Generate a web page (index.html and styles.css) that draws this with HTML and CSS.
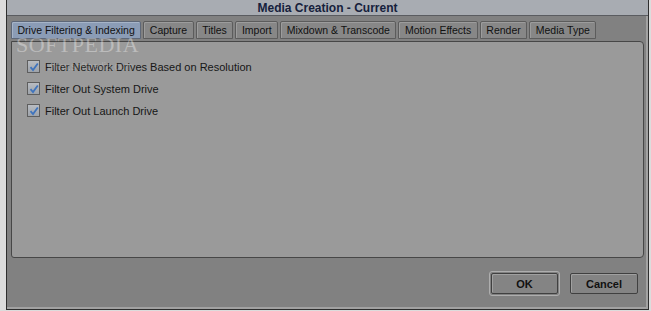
FILE: index.html
```html
<!DOCTYPE html>
<html>
    <head>
        <title>Media Creation - Current</title>
        <link rel="stylesheet" href="styles.css">
    </head>
    <body>
        <div class="window">
            <div class="titlebar">Media Creation - Current</div>
            <div class="tabs">
                <div class="tab active">Drive Filtering &amp; Indexing</div>
                <div class="tab">Capture</div>
                <div class="tab">Titles</div>
                <div class="tab">Import</div>
                <div class="tab">Mixdown &amp; Transcode</div>
                <div class="tab">Motion Effects</div>
                <div class="tab">Render</div>
                <div class="tab">Media Type</div>
            </div>
            <div class="panel">
                <label class="check-row">
                    <span class="checkbox"><svg width="10" height="10" viewBox="0 0 10 10"><path d="M1.5 5.2 L4 8 L8.8 1.5" fill="none" stroke="#3f74bd" stroke-width="1.8"/></svg></span>
                    Filter Network Drives Based on Resolution
                </label>
                <label class="check-row">
                    <span class="checkbox"><svg width="10" height="10" viewBox="0 0 10 10"><path d="M1.5 5.2 L4 8 L8.8 1.5" fill="none" stroke="#3f74bd" stroke-width="1.8"/></svg></span>
                    Filter Out System Drive
                </label>
                <label class="check-row">
                    <span class="checkbox"><svg width="10" height="10" viewBox="0 0 10 10"><path d="M1.5 5.2 L4 8 L8.8 1.5" fill="none" stroke="#3f74bd" stroke-width="1.8"/></svg></span>
                    Filter Out Launch Drive
                </label>
            </div>
            <div class="buttons">
                <div class="focus-ring"><button class="btn">OK</button></div>
                <button class="btn">Cancel</button>
            </div>
            <div class="watermark">SOFTPEDIA</div>
            <div class="watermark-small">www.softpedia.com</div>
        </div>
    </body>
</html>
```

FILE: styles.css
```css
body {
    margin: 0;
    background-color: #dcdcdc;
    font-family: "Liberation Sans", Arial, sans-serif;
}
.window {
    position: relative;
    margin-left: 6px;
    width: 641px;
    height: 309px;
    border: 1px solid #2e2e2e;
    border-top: none;
    background-color: #818181;
    box-shadow: inset -2px -2px 0 #a2a2a2;
    display: flex;
    flex-direction: column;
}
.titlebar {
    height: 15px;
    line-height: 16px;
    background-color: #a8acb2;
    border-bottom: 1px solid #5a5c60;
    text-align: center;
    font-size: 12px;
    font-weight: bold;
    color: #16213c;
}
.tabs {
    display: flex;
    gap: 2px;
    padding: 5px 0 0 4px;
}
.tab {
    height: 16px;
    line-height: 17px;
    padding: 0 5.5px;
    border: 1px solid #5c5c5c;
    border-radius: 2px 2px 0 0;
    background-color: #878787;
    box-shadow: inset 1px 1px 0 #9c9c9c;
    font-size: 10.5px;
    color: #111;
}
.tab.active {
    background-color: #8b9cb6;
    box-shadow: inset 1px 1px 0 #a6b4c8;
    border-color: #5d6778;
}
.panel {
    margin: 2px 4px 0 4px;
    height: 197px;
    padding: 18px 15px 0 15px;
    background-color: #9a9a9a;
    border: 1px solid #474747;
    border-radius: 0 4px 4px 3px;
    display: flex;
    flex-direction: column;
    gap: 9px;
}
.check-row {
    display: flex;
    align-items: center;
    gap: 5px;
    height: 13px;
    font-size: 11px;
    color: #161616;
}
.checkbox {
    width: 11px;
    height: 11px;
    border: 1px solid #5e5e5e;
    background: linear-gradient(#b8bcc2, #9ea3aa);
    display: flex;
    align-items: center;
    justify-content: center;
}
.buttons {
    display: flex;
    justify-content: flex-end;
    align-items: center;
    gap: 10px;
    padding: 13px 10px 0 0;
}
.focus-ring {
    border: 1px solid #aeaeae;
    border-radius: 3px;
    padding: 1px;
}
.btn {
    height: 21px;
    border: 1px solid #404040;
    border-radius: 2px;
    background-color: #848484;
    box-shadow: inset 1px 1px 0 #a0a0a0;
    font-family: "Liberation Sans", Arial, sans-serif;
    font-size: 11px;
    font-weight: bold;
    color: #111;
    padding: 0;
}
.focus-ring .btn {
    width: 67px;
}
.buttons > .btn {
    width: 68px;
}
.watermark {
    position: absolute;
    left: 9px;
    top: 32px;
    font-family: "Liberation Serif", serif;
    font-size: 22px;
    letter-spacing: 0.5px;
    color: rgba(255, 255, 255, 0.35);
    pointer-events: none;
}
.watermark-small {
    position: absolute;
    left: 40px;
    top: 61px;
    font-size: 10px;
    color: rgba(255, 255, 255, 0.2);
}
```
